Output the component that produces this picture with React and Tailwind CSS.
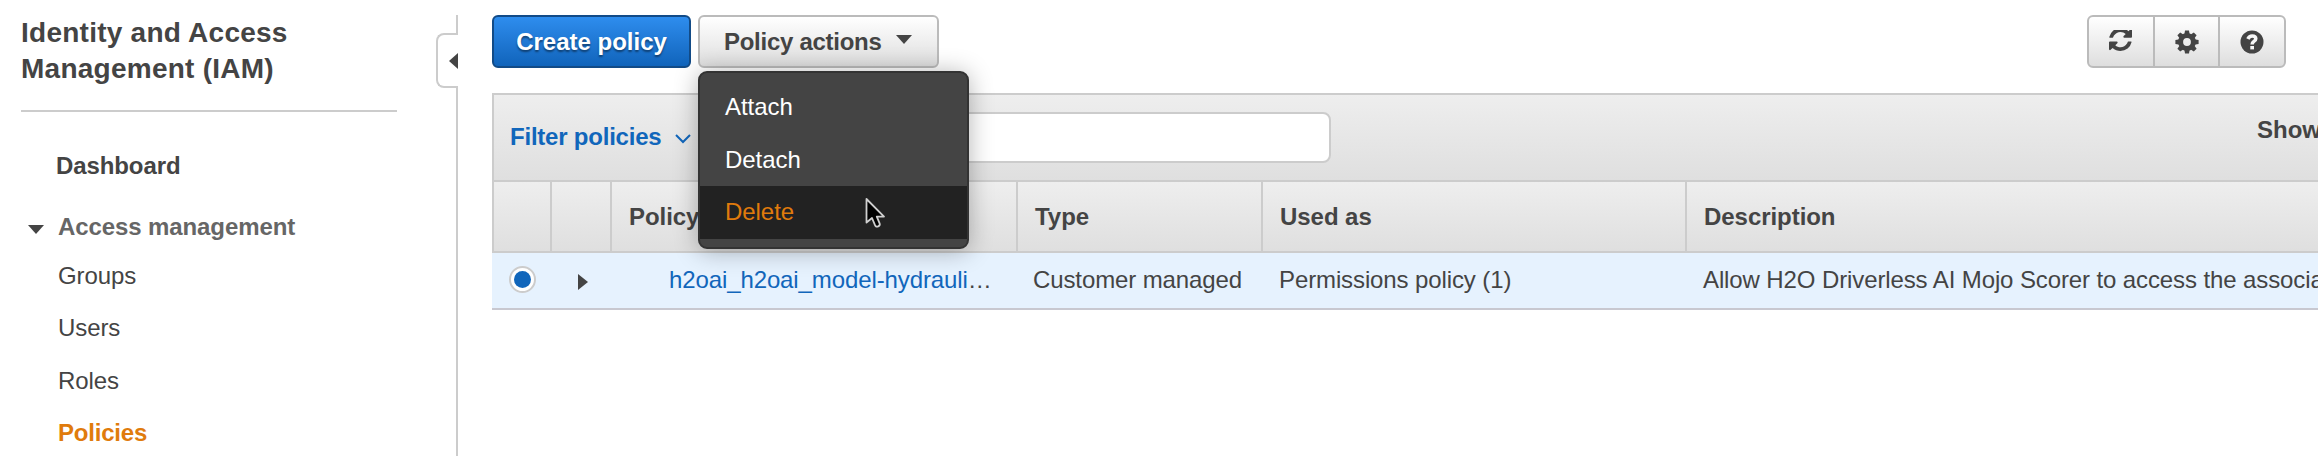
import React from "react";

const shadowText = "[text-shadow:0_2px_2px_rgba(0,0,0,0.45)]";

function Sidebar() {
  return (
    <aside className="flex h-[456px] w-[458px] shrink-0">
      <nav className="w-[397px] pl-[21px]">
        <h1 className="mt-[15px] h-[95px] text-[28px] leading-9 font-bold tracking-[0.25px]">
          Identity and Access
          <br />
          Management (IAM)
        </h1>
        <hr className="h-0.5 border-0 bg-[#cccccc]" />
        <div className="mt-[42px] pl-[35px] leading-6 font-bold tracking-[-0.1px]">Dashboard</div>
        <div className="mt-[37px] flex items-center pl-[7px] leading-6 font-bold tracking-[-0.1px] text-[#666]">
          <svg width="16" height="9" viewBox="0 0 16 9" className="mt-[5px] mr-[14px]">
            <path d="M0 0h16L8 9z" fill="#444" />
          </svg>
          Access management
        </div>
        <ul className="mt-[25px] flex flex-col gap-[28.3px] pl-[37px] leading-6 tracking-[-0.1px]">
          <li>Groups</li>
          <li>Users</li>
          <li>Roles</li>
          <li className="font-bold tracking-[-0.2px] text-[#e07b0c]">Policies</li>
        </ul>
      </nav>
      <div className="ml-[39px] flex w-[22px] flex-col items-end pt-[15px]">
        <div className="h-[18px] w-0.5 bg-[#ccc]" />
        <div className="flex h-[55px] w-[22px] shrink-0 items-center justify-end rounded-l-lg border-2 border-r-0 border-[#ccc]">
          <svg width="9" height="16" viewBox="0 0 9 16">
            <path d="M9 0v16L0 8z" fill="#444" />
          </svg>
        </div>
        <div className="w-0.5 flex-1 bg-[#ccc]" />
      </div>
    </aside>
  );
}

function RefreshIcon() {
  return (
    <svg width="23" height="23" viewBox="0 0 1536 1536" fill="#444">
      <path
        transform="translate(0 -128)"
        d="M1511 928q0 5-1 7-64 268-268 434.5t-478 166.5q-146 0-282.5-55t-243.5-157l-129 129q-19 19-45 19t-45-19-19-45v-448q0-26 19-45t45-19h448q26 0 45 19t19 45-19 45l-137 137q71 66 161 102t187 36q134 0 250-65t186-179q11-17 53-117 8-23 30-23h192q13 0 22.5 9.5t9.5 22.5zm25-800v448q0 26-19 45t-45 19h-448q-26 0-45-19t-19-45 19-45l138-138q-148-137-349-137-134 0-250 65t-186 179q-11 17-53 117-8 23-30 23h-199q-13 0-22.5-9.5t-9.5-22.5v-7q65-268 270-434.5t480-166.5q146 0 284 55.5t245 156.5l130-129q19-19 45-19t45 19 19 45z"
      />
    </svg>
  );
}

function GearIcon() {
  return (
    <svg width="24" height="24" viewBox="-12 -12 24 24" fill="#444">
      {[0, 45, 90, 135, 180, 225, 270, 315].map((a) => (
        <path key={a} transform={`rotate(${a})`} d="M-2.8 -7 L-2 -11.6 H2 L2.8 -7z" />
      ))}
      <circle r="6.4" fill="none" stroke="#444" strokeWidth="5" />
    </svg>
  );
}

function HelpIcon() {
  return (
    <svg width="24" height="24" viewBox="0 0 24 24">
      <circle cx="12" cy="12" r="11.5" fill="#444" />
      <path d="M7.9 9Q9.2 5.9 12.2 5.9Q15.8 5.9 15.8 8.8Q15.8 10.4 13.8 11.5Q12.1 12.5 12.1 14.6" fill="none" stroke="#f6f6f6" strokeWidth="3.5" />
      <path d="M10.3 16h3.7v3.4h-3.7z" fill="#f6f6f6" />
    </svg>
  );
}

function ActionsMenu() {
  return (
    <div className="absolute top-[56px] left-0 z-10 h-[178px] w-[271px] rounded-[9px] border-2 border-[#333] bg-[#444] pt-[8px] tracking-[-0.05px] text-white shadow-[0_2px_24px_rgba(0,0,0,0.3)]">
      <div className="flex h-[52.5px] items-center pl-[25px]">Attach</div>
      <div className="flex h-[52.5px] items-center pl-[25px]">Detach</div>
      <div className="flex h-[52.5px] items-center bg-[#222] pl-[25px] text-[#e07b0c]">Delete</div>
      <svg className="absolute top-[122px] left-[164px]" width="24" height="36" viewBox="0 0 24 36">
        <path
          d="M2.5 4V27.5L8 23L11 30.2Q12 32.4 14.2 31.4Q16.4 30.4 15.6 28.4L12.8 21.6H20z"
          fill="#000"
          stroke="#d0d0d0"
          strokeWidth="1.8"
          strokeLinejoin="round"
        />
      </svg>
    </div>
  );
}

function Toolbar() {
  return (
    <div className="flex h-[93px] pt-[15px]">
      <button className={`h-[53px] w-[199px] rounded-md border-2 border-[#124b87] bg-linear-to-b from-[#2e8dee] to-[#1064bb] font-bold text-white ${shadowText}`}>
        Create policy
      </button>
      <div className="relative ml-[7px]">
        <button className="flex h-[53px] w-[241px] items-center rounded-md border-2 border-[#bbb] bg-linear-to-b from-white to-[#dedede] pl-[24px] font-bold tracking-[-0.28px]">
          Policy actions
          <svg width="16" height="9" viewBox="0 0 16 9" className="mb-1 ml-[15px]">
            <path d="M0 0h16L8 9z" fill="#444" />
          </svg>
        </button>
        <ActionsMenu />
      </div>
      <div className="mr-[32px] ml-auto flex h-[53px] w-[199px] divide-x-2 divide-[#bbb] rounded-md border-2 border-[#bbb] bg-linear-to-b from-white to-[#dedede]">
        <button className="flex flex-1 items-center justify-center"><RefreshIcon /></button>
        <button className="flex flex-1 items-center justify-center"><GearIcon /></button>
        <button className="flex flex-1 items-center justify-center"><HelpIcon /></button>
      </div>
    </div>
  );
}

const cols = "grid grid-cols-[58px_60px_406px_245px_424px_1fr]";

function PolicyTable() {
  return (
    <section className="w-[1826px] overflow-hidden border-t-2 border-[#ccc]">
      <div className="flex h-[85px] border-l-2 border-[#ccc] bg-linear-to-b from-[#eee] to-[#dfdfdf] pl-[16px]">
        <div className="mt-[30px] flex h-6 w-[200px] items-center leading-6 font-bold tracking-[-0.22px] text-[#1166bb]">
          Filter policies
          <svg width="16" height="10" viewBox="0 0 16 10" className="mt-1 ml-[14px]">
            <path d="M1 1l7 7 7-7" fill="none" stroke="#1166bb" strokeWidth="2" />
          </svg>
        </div>
        <input className="mt-[17px] h-[51px] w-[621px] rounded-lg border-2 border-[#ccc] bg-white" />
        <div className="mt-[23px] ml-auto w-[61px] leading-6 font-bold whitespace-nowrap">Show</div>
      </div>
      <div className={`${cols} h-[73px] divide-x-2 divide-[#ccc] border-y-2 border-l-2 border-[#ccc] bg-linear-to-b from-[#eee] to-[#dfdfdf] leading-[70px] font-bold tracking-[-0.05px]`}>
        <div />
        <div />
        <div className="pl-[17px]">Policy name</div>
        <div className="pl-[17px]">Type</div>
        <div className="pl-[17px]">Used as</div>
        <div className="pl-[17px]">Description</div>
      </div>
      <div className={`${cols} h-[57px] border-b-2 border-[#c8c8d0] bg-[#e6f2fe] pl-0.5 leading-[53px] tracking-[-0.11px] whitespace-nowrap`}>
        <div className="flex items-center justify-center pr-0.5 pb-0.5">
          <span className="flex size-[27px] items-center justify-center rounded-full border-2 border-[#ccc] bg-white">
            <span className="size-[17px] rounded-full bg-[#1166bb]" />
          </span>
        </div>
        <div className="flex items-center pl-[26px]">
          <svg width="10" height="16" viewBox="0 0 10 16" className="mt-[3px]">
            <path d="M0 0v16l10-8z" fill="#444" />
          </svg>
        </div>
        <div className="pl-[57px]"><span className="text-[#1166bb]">h2oai_h2oai_model-hydrauli</span>…</div>
        <div className="pl-[15px]">Customer managed</div>
        <div className="pl-[16px]">Permissions policy (1)</div>
        <div className="pl-[16px]">Allow H2O Driverless AI Mojo Scorer to access the associated</div>
      </div>
    </section>
  );
}

export default function App() {
  return (
    <div className="flex h-[456px] w-[2318px] overflow-hidden bg-white font-['Liberation_Sans',Arial,sans-serif] text-[24px] text-[#444]">
      <Sidebar />
      <main className="ml-[34px] w-[1826px]">
        <Toolbar />
        <PolicyTable />
      </main>
    </div>
  );
}
